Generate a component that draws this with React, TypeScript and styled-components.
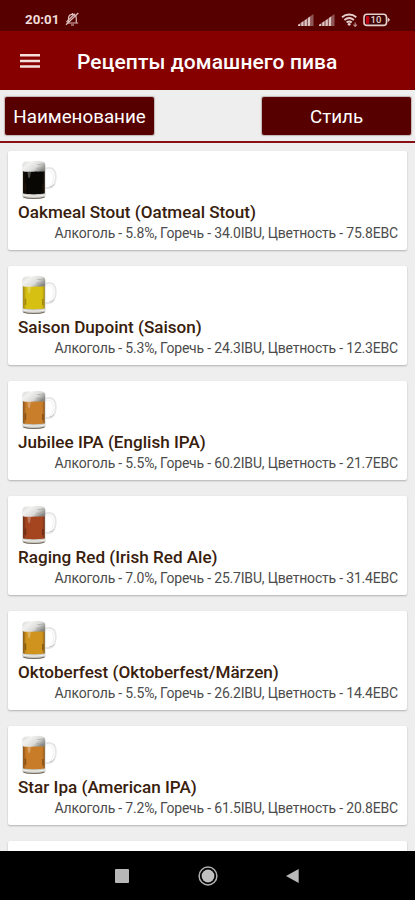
import React from "react";
import styled, { createGlobalStyle } from "styled-components";

const GlobalStyle = createGlobalStyle`
  * { box-sizing: border-box; }
  html, body { margin: 0; padding: 0; background: #000; }
  body { font-family: Roboto, "Noto Sans", sans-serif; overflow: hidden; }
  svg { display: block; }
`;

const Screen = styled.div`
  display: flex;
  flex-direction: column;
  width: 415px;
  height: 900px;
  overflow: hidden;
  background: #eeeeee;
`;

const StatusBar = styled.div`
  display: flex;
  flex: none;
  align-items: center;
  height: 31px;
  padding: 8px 24px 0 25px;
  background: #560000;
  color: #f0dcda;
`;

const Clock = styled.span`
  font-size: 13.3px;
  font-weight: 700;
  line-height: 16px;
  width: 40px;
`;

const StatusIcons = styled.div`
  display: flex;
  align-items: center;
  margin-left: auto;
`;

const IconSlot = styled.span<{ $gap: number }>`
  margin-left: ${(p) => p.$gap}px;
`;

const AppBar = styled.header`
  display: flex;
  flex: none;
  align-items: center;
  height: 59px;
  padding: 0 0 0 20px;
  background: #860000;
`;

const MenuButton = styled.button`
  display: flex;
  width: 21px;
  padding: 0;
  border: 0;
  background: none;
`;

const AppTitle = styled.h1`
  margin: 2px 0 0 36px;
  color: #fff;
  font-size: 21px;
  font-weight: 500;
  line-height: 26px;
  letter-spacing: 0.1px;
  white-space: nowrap;
`;

const FilterBar = styled.div`
  display: flex;
  flex: none;
  justify-content: space-between;
  height: 53px;
  padding: 7px 4px 0 5px;
  border-bottom: 2px solid #8a1018;
  background: #eeeeee;
`;

const FilterButton = styled.button`
  width: 149px;
  height: 38px;
  padding: 2px 0 0;
  border: 0;
  border-radius: 2px;
  background: #560000;
  box-shadow: 0 0 1px 1px rgba(70, 0, 0, 0.25);
  color: #fff;
  font: 400 18.8px/36px Roboto, sans-serif;
  white-space: nowrap;
`;

const RecipeList = styled.main`
  display: flex;
  flex: 1;
  flex-direction: column;
  gap: 16px;
  min-height: 0;
  padding: 8px 8px 0;
  overflow: hidden;
`;

const Card = styled.article`
  flex: none;
  height: 99px;
  padding: 8px 9px 0 10px;
  border-radius: 2px;
  background: #fff;
  box-shadow: 0 1px 2px rgba(0, 0, 0, 0.26);
`;

const RecipeName = styled.h2`
  margin: 1px 0 0;
  color: #38200d;
  font-size: 17.1px;
  font-weight: 500;
  line-height: 20px;
  white-space: nowrap;
`;

const RecipeStats = styled.p`
  margin: 2px 0 0;
  color: #4c4c4c;
  font-size: 14px;
  line-height: 18px;
  letter-spacing: -0.19px;
  text-align: right;
  white-space: nowrap;
`;

const NavBar = styled.nav`
  display: flex;
  flex: none;
  align-items: center;
  height: 49px;
  padding: 0 0 0 115px;
  background: #000;
`;

const NavIcon = styled.span<{ $gap?: number }>`
  margin-left: ${(p) => p.$gap ?? 0}px;
`;

const MutedBell = () => (
  <svg width="15" height="15" viewBox="0 0 15 15" fill="none" stroke="#dcbfbd" strokeWidth="1.2">
    <path d="M3.5 10.8V6.5C3.5 3.8 5 2.3 7.4 2.3S11.3 4 11.3 6.5v4.3" />
    <path d="M1.8 11h11.4M6 13h3M7.4 1v1.3" />
    <path d="M1 12.8 13.3 1M1.5 10 9.8 1.8" />
  </svg>
);

const Signal = () => (
  <svg width="16" height="12" viewBox="0 0 16 12">
    <path d="M0 12V10.7L15.5 0v12z" fill="#8f5656" />
    <path d="M0 12v-1.2l2-1.1V12zM3.3 12V8.6l2.1-1.4V12zM6.6 12V6.4l2.2-1.5V12zM10 12V4l2.1-1.4V12z" fill="#dcc6c4" />
  </svg>
);

const Wifi = () => (
  <svg width="17" height="14" viewBox="0 0 17 14" fill="none" stroke="#e6d0ce" strokeWidth="1.9">
    <path d="M1 4.2c4.3-3.6 10-3.6 14.3 0M3.4 7c3-2.5 6.5-2.5 9.5 0M5.7 9.5c1.6-1.4 3.4-1.4 5 0" />
    <circle cx="8.2" cy="11.3" r="1.4" fill="#e6d0ce" stroke="none" />
    <path d="M14.2 9.5v4M12.5 11.6l1.7 1.8 1.7-1.8" strokeWidth="1.1" stroke="#bf9694" />
  </svg>
);

const Battery = () => (
  <svg width="28" height="14" viewBox="0 0 28 14">
    <rect x="1" y="1.2" width="22.5" height="11.2" rx="3" fill="#3f0505" stroke="#e6d0ce" strokeWidth="1.6" />
    <path d="M24.7 4.3 27 6.8l-2.3 2.6z" fill="#e6d0ce" />
    <rect x="3" y="3" width="3.2" height="7.7" rx=".8" fill="#c40012" />
    <text x="13" y="10.2" textAnchor="middle" fontFamily="Roboto, sans-serif" fontSize="9.5" fontWeight="500" fill="#e6d0ce">10</text>
  </svg>
);

const BeerMug = ({ id, color, shade }: { id: string; color: string; shade: string }) => (
  <svg width="50" height="42" viewBox="0.6 0 50 42">
    <defs>
      <linearGradient id={`${id}-beer`} x1="0" x2="1">
        <stop offset="0" stopColor={shade} />
        <stop offset=".15" stopColor={color} />
        <stop offset=".88" stopColor={color} />
        <stop offset="1" stopColor={shade} />
      </linearGradient>
      <linearGradient id={`${id}-foam`} x1="0" x2="1" y2=".6">
        <stop offset="0" stopColor="#d6d6d4" />
        <stop offset=".35" stopColor="#f1f1ef" />
        <stop offset=".7" stopColor="#dadbd9" />
        <stop offset="1" stopColor="#888884" />
      </linearGradient>
    </defs>
    <path d="M28 9.5c5-1.8 9.2.2 10.2 5.5 1 6-1.2 12-4.2 13.4-2 .9-4 .7-6 .4" fill="none" stroke="#e6e6e6" strokeWidth="1.8" />
    <path d="M29 11.5c3.4-1 6.2.7 6.8 5 .7 4.9-1.1 9.3-3.2 10" fill="none" stroke="#f0f0ef" strokeWidth="1" />
    <path d="M32 27.6c1.8.4 3.6-.5 4.6-2.4" fill="none" stroke="#b7b7b3" strokeWidth=".8" />
    <path d="M5 10v27.5c0 3 23 3 23 0V10z" fill="#c9c8c3" />
    <path d="M5.6 11.5v22.8c3 1.2 18.4 1.2 21.8 0V11.5z" fill={`url(#${id}-beer)`} />
    <path d="M5 12C4.5 8 4.1 5 6.5 3.2c2-1.5 5.3-.4 7.6-.7 3.4-.8 8-1.2 11.7.2 3 1.2 1.9 4.6 2 9.3-2.3.9-5 .1-7 .7-3-.8-6 .4-8.4-.2-2.4.6-4.8.4-7.4-.5z" fill={`url(#${id}-foam)`} />
    <path d="M20 5.5c2 .4 4-.8 6.8-.2M18.8 9.2c3 .5 4.6-.8 8-.3" fill="none" stroke="#a9a9a5" strokeWidth=".8" />
    <path d="M9.6 11.5c1.2 2.8.4 7 2.1 8 1.6-.7 1.1-5.3 2.5-8z" fill="#fff" opacity=".28" />
    <path d="M8 24.5v6.5M25.5 25v6.3" stroke={shade} strokeWidth="1.7" />
    <path d="M5.5 35.7c4.5 1.7 17.5 1.7 22 0" fill="none" stroke="#f5f5f2" strokeWidth="1.2" />
    <path d="M6 38.3c5 1.6 16 1.6 21 0" fill="none" stroke="#756d60" strokeWidth="1.2" />
  </svg>
);

const recipes = [
  { id: "stout", name: "Oakmeal Stout (Oatmeal Stout)", alcohol: "5.8", ibu: "34.0", ebc: "75.8", color: "#080704", shade: "#1c1208" },
  { id: "saison", name: "Saison Dupoint (Saison)", alcohol: "5.3", ibu: "24.3", ebc: "12.3", color: "#d6c112", shade: "#a18814" },
  { id: "jubilee", name: "Jubilee IPA (English IPA)", alcohol: "5.5", ibu: "60.2", ebc: "21.7", color: "#c87e2b", shade: "#8b5319" },
  { id: "red", name: "Raging Red (Irish Red Ale)", alcohol: "7.0", ibu: "25.7", ebc: "31.4", color: "#a4451f", shade: "#702d16" },
  { id: "oktober", name: "Oktoberfest (Oktoberfest/Märzen)", alcohol: "5.5", ibu: "26.2", ebc: "14.4", color: "#d0941e", shade: "#875b14" },
  { id: "star", name: "Star Ipa (American IPA)", alcohol: "7.2", ibu: "61.5", ebc: "20.8", color: "#c97c27", shade: "#8b5319" },
];

export default function App() {
  return (
    <>
      <GlobalStyle />
      <Screen>
        <StatusBar>
          <Clock>20:01</Clock>
          <MutedBell />
          <StatusIcons>
            <Signal />
            <IconSlot $gap={5}><Signal /></IconSlot>
            <IconSlot $gap={6}><Wifi /></IconSlot>
            <IconSlot $gap={5}><Battery /></IconSlot>
          </StatusIcons>
        </StatusBar>
        <AppBar>
          <MenuButton aria-label="Меню">
            <svg width="21" height="16" viewBox="0 0 21 16" fill="#f5dfdd">
              <path d="M0 1h20v2.5H0zM0 6.7h20v2.5H0zM0 12.3h20v2.5H0z" />
            </svg>
          </MenuButton>
          <AppTitle>Рецепты домашнего пива</AppTitle>
        </AppBar>
        <FilterBar>
          <FilterButton>Наименование</FilterButton>
          <FilterButton>Стиль</FilterButton>
        </FilterBar>
        <RecipeList>
          {recipes.map((r) => (
            <Card key={r.id}>
              <BeerMug id={r.id} color={r.color} shade={r.shade} />
              <RecipeName>{r.name}</RecipeName>
              <RecipeStats>
                Алкоголь - {r.alcohol}%, Горечь - {r.ibu}IBU, Цветность - {r.ebc}EBC
              </RecipeStats>
            </Card>
          ))}
          <Card />
        </RecipeList>
        <NavBar>
          <NavIcon>
            <svg width="14" height="14"><rect width="14" height="14" rx="1" fill="#b8b8b8" /></svg>
          </NavIcon>
          <NavIcon $gap={69}>
            <svg width="20" height="20" viewBox="0 0 20 20">
              <circle cx="10" cy="10" r="8.9" fill="none" stroke="#b0b0b0" strokeWidth="1.5" />
              <circle cx="10" cy="10" r="6.4" fill="#c0c0c0" />
            </svg>
          </NavIcon>
          <NavIcon $gap={68}>
            <svg width="13" height="14"><path d="M0 7 12.7 0v14z" fill="#b8b8b8" /></svg>
          </NavIcon>
        </NavBar>
      </Screen>
    </>
  );
}
